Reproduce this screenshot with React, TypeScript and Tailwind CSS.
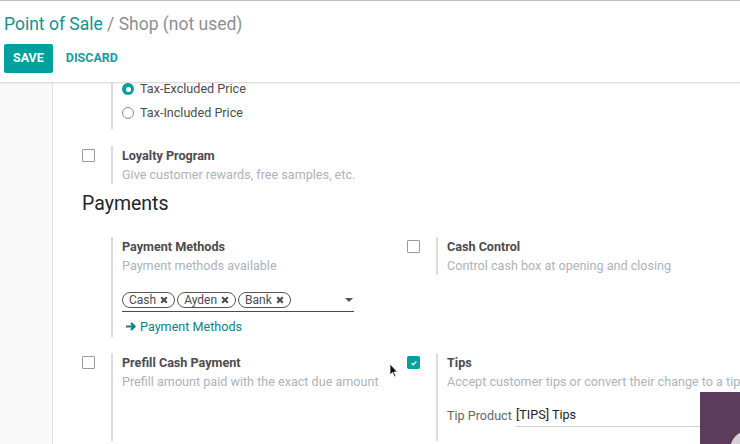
import React from 'react';

const FONT = { fontFamily: 'Roboto, "Noto Sans", sans-serif' };

function Box({ checked = false }: { checked?: boolean }) {
  if (checked) {
    return (
      <span className="flex h-[13px] w-[13px] items-center justify-center rounded-[2px] bg-[#00a09d]">
        <svg width="8" height="8" viewBox="0 0 10 10">
          <path d="M2 5.2 L4.2 7.2 L8 3" fill="none" stroke="#fff" strokeWidth="1.6" />
        </svg>
      </span>
    );
  }
  return <span className="block h-[13px] w-[13px] rounded-[1px] border-[1.5px] border-[#9a9a9a] bg-white" />;
}

function Setting({
  title,
  desc,
  checked,
  box = true,
  children,
}: {
  title: string;
  desc: string;
  checked?: boolean;
  box?: boolean;
  children?: React.ReactNode;
}) {
  return (
    <div className="flex">
      <div className="w-[29px] shrink-0 pt-[3px]">{box && <Box checked={checked} />}</div>
      <div className="border-l-2 border-[#dcdcdc] pl-[9px]">
        <div className="text-[12.6px] font-bold leading-[19px] text-[#4c4c4c]">{title}</div>
        <div className="whitespace-nowrap text-[12.6px] leading-[19px] text-[#adb3ba]">{desc}</div>
        {children}
      </div>
    </div>
  );
}

function Tag({ label }: { label: string }) {
  return (
    <span className="flex h-[16px] items-center gap-[4px] rounded-full border border-[#555] px-[6px] text-[12px] leading-none text-[#4c4c4c]">
      {label}
      <svg width="8" height="8" viewBox="0 0 10 10">
        <path d="M1.5 1.5 L8.5 8.5 M8.5 1.5 L1.5 8.5" stroke="#4c4c4c" strokeWidth="2.6" />
      </svg>
    </span>
  );
}

export default function App() {
  return (
    <div className="relative h-[444px] w-[740px] overflow-hidden bg-[#f9f9f9]" style={FONT}>
      {/* control panel */}
      <div className="relative z-10 h-[83px] border-t border-b border-t-[#c9b6c6] border-b-[#dcdcdc] bg-white px-[4px] shadow-[0_1px_2px_rgba(0,0,0,0.06)]">
        <div className="pt-[11px] text-[17.5px] leading-[24px]">
          <span className="text-[#16918d]">Point of Sale</span>
          <span className="text-[#8f8f8f]"> / Shop (not used)</span>
        </div>
        <div className="mt-[8px] flex items-center gap-[13px]">
          <button className="h-[29px] rounded-[2px] bg-[#00a09d] px-[9px] text-[12.5px] font-bold text-white">SAVE</button>
          <button className="text-[12.5px] font-bold text-[#16a09c]">DISCARD</button>
        </div>
      </div>

      {/* sheet */}
      <div className="ml-[52px] h-[361px] overflow-hidden border-l border-[#e2e2e2] bg-white pl-[29px]">
        <div className="-mt-[6px]">
          {/* pricing radios */}
          <div className="ml-[29px] border-l-2 border-[#dcdcdc] pl-[9px] pb-[4px]">
            <div className="flex h-[24px] items-center gap-[6px] text-[12.6px] text-[#4c4c4c]">
              <span className="flex h-[12px] w-[12px] items-center justify-center rounded-full bg-[#00a09d]">
                <span className="h-[5px] w-[5px] rounded-full bg-white" />
              </span>
              Tax-Excluded Price
            </div>
            <div className="flex h-[24px] items-center gap-[6px] text-[12.6px] text-[#4c4c4c]">
              <span className="h-[12px] w-[12px] rounded-full border border-[#8a8a8a]" />
              Tax-Included Price
            </div>
          </div>

          <div className="mt-[17px]">
            <Setting title="Loyalty Program" desc="Give customer rewards, free samples, etc." />
          </div>

          <div className="mt-[9px] text-[19.5px] leading-[22px] text-[#212529]">Payments</div>

          <div className="mt-[22px] grid grid-cols-[325px_325px]">
            <Setting title="Payment Methods" desc="Payment methods available" box={false}>
              <div className="mt-[15px] flex h-[22px] w-[232px] items-center gap-[2px] border-b border-[#4c4c4c] pb-[1px]">
                <Tag label="Cash" />
                <Tag label="Ayden" />
                <Tag label="Bank" />
                <svg className="ml-auto mr-[1px]" width="8" height="5" viewBox="0 0 8 5">
                  <path d="M0 0 H8 L4 4 Z" fill="#555" />
                </svg>
              </div>
              <div className="mt-[5px] flex items-center gap-[3px] pb-[1px] text-[12.6px] leading-[19px] text-[#137f7c]">
                <svg width="12" height="11" viewBox="0 0 12 11" className="ml-[3px]">
                  <path d="M1 5.5 H9.5 M6 2 L9.5 5.5 L6 9" fill="none" stroke="#137f7c" strokeWidth="2.2" />
                </svg>
                Payment Methods
              </div>
            </Setting>
            <div>
              <Setting title="Cash Control" desc="Control cash box at opening and closing" />
            </div>
          </div>

          <div className="mt-[16px] grid grid-cols-[325px_325px]">
            <Setting title="Prefill Cash Payment" desc="Prefill amount paid with the exact due amount" />
            <Setting title="Tips" desc="Accept customer tips or convert their change to a tip" checked>
              <div className="mt-[13px] flex items-end pb-[14px] text-[12.6px]">
                <span className="w-[69px] leading-[22px] text-[#666]">Tip Product</span>
                <span className="w-[190px] border-b border-[#cfcfcf] leading-[22px] text-[#222]">[TIPS] Tips</span>
              </div>
            </Setting>
          </div>
        </div>
      </div>

      {/* overlapping video thumbnail */}
      <div className="absolute left-[700px] top-[392px] h-[52px] w-[40px] overflow-hidden bg-[#5c3b5d]">
        <div className="absolute left-[30px] top-[38px] h-[40px] w-[40px] rounded-full bg-[#d9cfd8]" />
      </div>

      {/* mouse cursor */}
      <svg className="absolute left-[389px] top-[363px]" width="10" height="15" viewBox="0 0 10 15">
        <path d="M1 1 L1 12 L3.5 9.5 L5.5 14 L7 13.3 L5 9 L8.5 9 Z" fill="#111" stroke="#fff" strokeWidth="0.8" />
      </svg>
    </div>
  );
}
